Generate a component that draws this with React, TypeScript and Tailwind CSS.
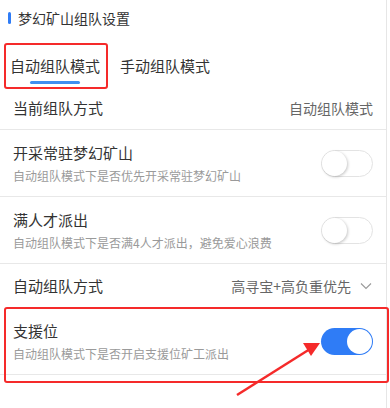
import React from "react";

const font = { fontFamily: '"Noto Sans CJK SC", "Noto Sans", sans-serif' };

function Toggle({ on }: { on: boolean }) {
  return on ? (
    <div className="w-[52px] h-[27px] rounded-full bg-[#2f7cf6] flex items-center justify-end pr-[1px] shrink-0">
      <div className="w-[25px] h-[25px] rounded-full bg-white" />
    </div>
  ) : (
    <div className="w-[52px] h-[27px] rounded-full bg-white border border-[#e3e3e3] flex items-center pl-[0px] shrink-0">
      <div className="w-[25px] h-[25px] rounded-full bg-white shadow-[1px_1px_3px_rgba(0,0,0,0.22)]" />
    </div>
  );
}

function SwitchRow({ title, sub, on }: { title: string; sub: string; on: boolean }) {
  return (
    <div className="h-[67px] border-b border-[#e8e8e8] flex items-center justify-between pl-[13px] pr-[13px]">
      <div className="flex flex-col pt-[1px]">
        <div className="text-[15px] leading-[22px] text-[#333]">{title}</div>
        <div className="text-[12px] leading-[18px] text-[#9a9a9a] mt-[3px]">{sub}</div>
      </div>
      <Toggle on={on} />
    </div>
  );
}

export default function App() {
  return (
    <div className="relative w-[390px] h-[408px] bg-white overflow-hidden" style={font}>
      <div className="w-[387px] h-[408px] border-r border-[#e6e6e6]">
        <div className="h-[36px] flex items-center pl-[8px]">
          <div className="w-[3px] h-[12px] rounded-full bg-[#2f7cf6]" />
          <div className="ml-[7px] text-[14px] text-[#333]">梦幻矿山组队设置</div>
        </div>
        <div className="h-[52px] flex items-start pt-[19px]">
          <div className="px-[10px] flex flex-col items-center">
            <div className="text-[15px] leading-[22px] text-[#333]">自动组队模式</div>
            <div className="w-[50px] h-[3px] rounded-full bg-[#3d8ef0] mt-[4px]" />
          </div>
          <div className="px-[10px]">
            <div className="text-[15px] leading-[22px] text-[#333]">手动组队模式</div>
          </div>
        </div>
        <div className="h-[42px] border-b border-[#e8e8e8] flex items-center justify-between px-[13px]">
          <div className="text-[15px] text-[#333]">当前组队方式</div>
          <div className="text-[14px] text-[#666]">自动组队模式</div>
        </div>
        <SwitchRow title="开采常驻梦幻矿山" sub="自动组队模式下是否优先开采常驻梦幻矿山" on={false} />
        <SwitchRow title="满人才派出" sub="自动组队模式下是否满4人才派出，避免爱心浪费" on={false} />
        <div className="h-[44px] flex items-center justify-between pl-[13px] pr-[14px]">
          <div className="text-[15px] text-[#333]">自动组队方式</div>
          <div className="flex items-center text-[14px] text-[#666]">
            <span>高寻宝+高负重优先</span>
            <svg width="12" height="8" viewBox="0 0 12 8" className="ml-[9px]">
              <path d="M1 1.5 L6 6.5 L11 1.5" fill="none" stroke="#999" strokeWidth="1.1" />
            </svg>
          </div>
        </div>
        <SwitchRow title="支援位" sub="自动组队模式下是否开启支援位矿工派出" on={true} />
      </div>

      <div className="absolute left-[4px] top-[43px] w-[104px] h-[46px] border-[2.5px] border-[#f52a2a] rounded-[3px]" />
      <div className="absolute left-[4px] top-[307px] w-[385px] h-[76px] border-[2.5px] border-[#f52a2a] rounded-[3px]" />
      <svg className="absolute left-0 top-0" width="390" height="408" viewBox="0 0 390 408">
        <line x1="237" y1="395" x2="310" y2="349" stroke="#f52a2a" strokeWidth="2.5" />
        <polygon points="320,343 303,343 311,356" fill="#f52a2a" />
      </svg>
    </div>
  );
}
